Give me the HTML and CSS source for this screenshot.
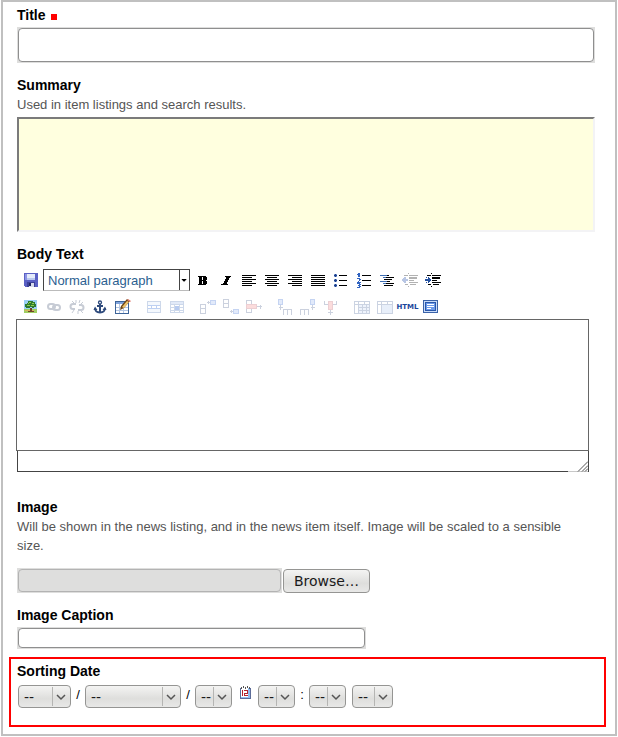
FILE: index.html
```html
<!DOCTYPE html>
<html lang="en">
<head>
<meta charset="utf-8">
<title>Edit News Item</title>
<link rel="stylesheet" href="styles.css">
</head>
<body>
<form class="frame">
  <div class="field">
    <label class="label" for="title">Title <span class="required"></span></label>
    <div class="well"><input class="input input-large" id="title" type="text"></div>
  </div>

  <div class="field">
    <label class="label" for="summary">Summary</label>
    <p class="help">Used in item listings and search results.</p>
    <textarea class="summary" id="summary"></textarea>
  </div>

  <div class="field">
    <label class="label" for="body-text">Body Text</label>
    <div class="toolbar">
      <div class="tools">
        <button class="tool" type="button" aria-label="Save"><svg viewBox="0 0 16 16"><path fill="#5a60c4" d="M1 1h14v14H2l-1-1z"/><path fill="#8c94e4" d="M2 2h2v6H2z"/><path fill="#e4ebfa" d="M4 2h8v6H4z"/><path fill="#b9c8ee" d="M4 6h8v2H4z"/><path fill="#3d4199" d="M4 10h8v5H4z"/><path fill="#d8dcec" d="M6 11h5v4H6z"/><path fill="#222766" d="M6 11h2v3H6z"/></svg></button>
        <span class="style-picker">
          <select class="style-select" aria-label="Paragraph style"><option>Normal paragraph</option></select>
          <svg class="style-arrow" viewBox="0 0 10 20"><path fill="#000" d="M2 9h5v1H6v1H5v1H4v-1H3v-1H2z"/></svg>
        </span>
        <button class="tool" type="button" aria-label="Bold"><svg viewBox="0 0 16 16"><path fill="#000" d="M3 4h8v1h1v3h-1v1h1v3h-1v1H3v-1h1V5H3zM7 5v3h1V5zM7 9v3h1V9z"/></svg></button>
        <button class="tool" type="button" aria-label="Italic"><svg viewBox="0 0 16 16"><path fill="#000" d="M7 4h6v1h-1v1h-1v2h-1v2H9v2h1v1H3v-1h2v-1h1V9h1V7h1V5H7z"/></svg></button>
        <button class="tool" type="button" aria-label="Align left"><svg viewBox="0 0 16 16"><path d="M1 3h14v1H1zM1 5h10v1H1zM1 7h14v1H1zM1 9h10v1H1zM1 11h14v1H1zM1 13h10v1H1z"/></svg></button>
        <button class="tool" type="button" aria-label="Align center"><svg viewBox="0 0 16 16"><path d="M1 3h14v1H1zM3 5h10v1H3zM1 7h14v1H1zM3 9h10v1H3zM1 11h14v1H1zM3 13h10v1H3z"/></svg></button>
        <button class="tool" type="button" aria-label="Align right"><svg viewBox="0 0 16 16"><path d="M1 3h14v1H1zM5 5h10v1H5zM1 7h14v1H1zM5 9h10v1H5zM1 11h14v1H1zM5 13h10v1H5z"/></svg></button>
        <button class="tool" type="button" aria-label="Justify"><svg viewBox="0 0 16 16"><path d="M1 3h14v1H1zM1 5h14v1H1zM1 7h14v1H1zM1 9h14v1H1zM1 11h14v1H1zM1 13h14v1H1z"/></svg></button>
        <button class="tool" type="button" aria-label="Bulleted list"><svg viewBox="0 0 16 16"><path d="M6 3h8v1H6zM6 8h8v1H6zM6 13h8v1H6z"/><path fill="#7f9dd2" d="M1 2h3v3H1zM1 7h3v3H1zM1 12h3v3H1z"/><path fill="#1d3f8c" d="M2 2h1v3H2zM1 3h3v1H1zM2 7h1v3H2zM1 8h3v1H1zM2 12h1v3H2zM1 13h3v1H1z"/></svg></button>
        <button class="tool" type="button" aria-label="Numbered list"><svg viewBox="0 0 16 16"><path d="M6 3h9v1H6zM6 8h9v1H6zM6 13h9v1H6z"/><path fill="#2f62c0" d="M2 1h2v4H2zM1 2h1v1H1zM1 6h3v1h1v1H4v1H3v1h2v1H1v-1h1V9h1V7H1zM1 11h3v1h1v1H4v1h1v1H4v1H1v-1h2v-1H2v-1h1v-1H1z"/></svg></button>
        <button class="tool" type="button" aria-label="Definition list"><svg viewBox="0 0 16 16"><path d="M5 3h5v1H5zM5 5h10v1H5zM5 7h8v1H5zM5 9h6v1H5zM5 11h10v1H5zM5 13h9v1H5z"/><path fill="#3f6fb4" d="M1 3h7v1H1zM1 9h7v1H1zM4 5h3v1H4zM4 11h3v1H4z"/></svg></button>
        <button class="tool" type="button" aria-label="Decrease indent"><svg viewBox="0 0 16 16"><path fill="#b2b2b2" d="M7 3h9v1H7zM7 5h8v2H7zM7 8h5v1H7zM7 10h9v1H7zM3 12h3v1H3zM8 12h6v1H8zM2 3h4v1H2zM6 1h1v1H6zM6 14h1v1H6z"/><path fill="#b8c6e4" d="M0 7h1V6h1V5h2v2h2v2H4v2H2v-1H1V9H0z"/></svg></button>
        <button class="tool" type="button" aria-label="Increase indent"><svg viewBox="0 0 16 16"><path d="M7 3h9v1H7zM7 5h8v2H7zM7 8h5v1H7zM7 10h9v1H7zM3 12h3v1H3zM8 12h6v1H8zM2 3h4v1H2zM6 1h1v1H6zM6 14h1v1H6z"/><path fill="#24509f" d="M0 7h3V5h1v1h1v1h1v2H5v1H4v1H3V9H0zM1 5h1v1H1zM1 10h1v1H1z"/></svg></button>
      </div>
      <div class="tools">
        <button class="tool" type="button" aria-label="Insert image"><svg viewBox="0 0 16 16"><path fill="#9bd1f4" d="M1 1h13v9H1z"/><path fill="#9fce62" d="M1 10h13v4H1z"/><path fill="#d9b35c" d="M2 11h9v1H2z"/><path fill="#70452a" d="M8 9h1v3h2v1H5v-1h2V9z"/><path fill="#2f7a30" d="M5 2h5v1h2v2h1v3h-2v1H9V8H7v1H3V8H2V5h2V4h1z"/><path fill="#8fd04a" d="M6 3h2v1H6zM9 4h2v1H9zM4 6h3v1H4zM8 6h3v1H8zM5 4h1v1H5z"/></svg></button>
        <button class="tool faded" type="button" aria-label="Insert link"><svg class="smooth" viewBox="0 0 16 16"><g fill="none" stroke="#758199" stroke-width="2"><rect x="2" y="5" width="7" height="5" rx="2.5"/><rect x="7" y="6" width="7" height="5" rx="2.5"/></g></svg></button>
        <button class="tool faded" type="button" aria-label="Remove link"><svg class="smooth" viewBox="0 0 16 16"><g fill="none" stroke="#758199" stroke-width="2"><path d="M7 5H4a2.500 2.500 0 0 0 0 5h2M10 6h2a2.500 2.500 0 0 1 0 5H9"/><path stroke-width="1" d="M7 1v3M3 2l2 2M11 1l-1 3M14 3l-2 2M9 12v3M5 11l-2 3M12 12l2 2"/></g></svg></button>
        <button class="tool" type="button" aria-label="Anchor"><svg class="smooth" viewBox="0 0 16 16"><g fill="none" stroke="#2e4a7c"><circle cx="8" cy="3.500" r="1.500" stroke-width="1.300"/><path stroke-width="2" d="M8 5v9M5 7h6"/><path stroke-width="1.800" d="M3 9c0 3 2 4.500 5 4.500s5-1.500 5-4.500"/></g><path fill="#2e4a7c" d="M1.500 11l1.500-3.500L5.500 11zM10.500 11L13 7.500 14.500 11z"/></svg></button>
        <button class="tool" type="button" aria-label="Insert table"><svg viewBox="0 0 16 16"><path fill="#3d6499" d="M0 2h14v13H0z"/><path fill="#fff" d="M1 5h12v9H1z"/><path fill="#7fa3dc" d="M1 3h12v2H1z"/><path fill="#b5c7e3" d="M1 8h12v1H1zM1 11h12v1H1zM4 5h1v9H4zM8 5h1v9H8z"/><g class="smooth"><path fill="#6b4415" d="M5 11l1-4 6-7 3 2-6 7z"/><path fill="#edc36b" d="M7 8l5-6 2 1-5 6z"/><path fill="#e07d70" d="M12 1l1-1 3 2-1 1z"/></g></svg></button>
        <span class="gap"></span>
        <button class="tool faded" type="button" aria-label="Row properties"><svg viewBox="0 0 16 16"><path fill="#84a0cc" d="M1 2h14v12H1z"/><path fill="#e6eefb" d="M2 3h12v3H2zM2 10h12v3H2z"/><path fill="#5b8ce0" d="M2 6h12v4H2z"/><path fill="#fff" d="M2 7h3v2H2zM6 7h4v2H6zM11 7h3v2h-3z"/></svg></button>
        <button class="tool faded" type="button" aria-label="Cell properties"><svg viewBox="0 0 16 16"><path fill="#84a0cc" d="M1 2h14v12H1z"/><path fill="#b9cdf0" d="M2 3h12v2H2z"/><path fill="#fff" d="M2 6h3v2H2zM6 6h4v1H6zM11 6h3v2h-3zM2 9h3v2H2zM11 9h3v2h-3zM2 12h3v1H2zM6 12h4v1H6zM11 12h3v1h-3z"/><path fill="#4d80dc" d="M6 7h4v4H6z"/></svg></button>
        <span class="gap"></span>
        <button class="tool faded" type="button" aria-label="Insert row before"><svg viewBox="0 0 16 16"><path fill="none" stroke="#7f8fae" d="M0.500 5.500h5v4h-5zM0.500 9.500h5v5h-5zM7 3.500h3M8.500 2v3"/><path fill="#7095df" d="M10 1h6v5h-6z"/><path fill="#b8cdf5" d="M11 2h4v3h-4z"/></svg></button>
        <button class="tool faded" type="button" aria-label="Insert row after"><svg viewBox="0 0 16 16"><path fill="none" stroke="#7f8fae" d="M0.500 0.500h5v4h-5zM0.500 4.500h5v4h-5zM7 12.500h3M8.500 11v3"/><path fill="#7095df" d="M10 10h6v5h-6z"/><path fill="#b8cdf5" d="M11 11h4v3h-4z"/></svg></button>
        <button class="tool faded" type="button" aria-label="Delete row"><svg viewBox="0 0 16 16"><path fill="none" stroke="#7f8fae" d="M0.500 1.500h5v4h-5zM0.500 9.500h5v4h-5zM11 7.500h5M14.500 6v4"/><path fill="#d08a94" d="M0 5h11v5H0z"/><path fill="#f6aaaa" d="M1 6h9v3H1z"/></svg></button>
        <span class="gap"></span>
        <button class="tool faded" type="button" aria-label="Insert column before"><svg viewBox="0 0 16 16"><path fill="none" stroke="#7f8fae" d="M6.500 16v-5.500h4V16M10.500 10.500h4V16M3.500 6v5M2 8.500h4"/><path fill="#7095df" d="M1 0h5v6H1z"/><path fill="#b8cdf5" d="M2 1h3v4H2z"/></svg></button>
        <button class="tool faded" type="button" aria-label="Insert column after"><svg viewBox="0 0 16 16"><path fill="none" stroke="#7f8fae" d="M0.500 16v-5.500h4V16M4.500 10.500h4V16M12.500 6v5M11 8.500h4"/><path fill="#7095df" d="M10 0h5v6h-5z"/><path fill="#b8cdf5" d="M11 1h3v4h-3z"/></svg></button>
        <button class="tool faded" type="button" aria-label="Delete column"><svg viewBox="0 0 16 16"><path fill="none" stroke="#7f8fae" d="M1.500 2v3.500h4M13.500 2v3.500h-4M7.500 10v6M5 13.500h5"/><path fill="#d08a94" d="M5 2h5v9H5z"/><path fill="#f6aaaa" d="M6 3h3v7H6z"/></svg></button>
        <span class="gap"></span>
        <button class="tool faded" type="button" aria-label="Split cells"><svg viewBox="0 0 16 16"><path fill="#8094b8" d="M0 2h16v13H0z"/><path fill="#fff" d="M1 3h3v2H1zM5 3h5v2H5zM11 3h4v2h-4zM1 6h3v8H1z"/><path fill="#d7e3f8" d="M5 6h3v2H5zM9 6h3v2H9zM13 6h2v2h-2zM5 9h3v2H5zM9 9h3v2H9zM13 9h2v2h-2zM5 12h3v2H5zM9 12h3v2H9zM13 12h2v2h-2z"/></svg></button>
        <button class="tool faded" type="button" aria-label="Merge cells"><svg viewBox="0 0 16 16"><path fill="#8094b8" d="M0 2h16v13H0z"/><path fill="#fff" d="M1 3h3v2H1zM5 3h5v2H5zM11 3h4v2h-4zM1 6h3v8H1z"/><path fill="#c7d8f5" d="M5 6h10v8H5z"/></svg></button>
        <button class="tool tool-html" type="button">HTML</button>
        <button class="tool" type="button" aria-label="Full screen"><svg viewBox="0 0 16 16"><path fill="#3a62a8" d="M0 1h15v13H0z"/><path fill="#c9dbf8" d="M1 2h13v11H1z"/><path fill="#2856a8" d="M2 3h11v9H2z"/><path fill="#6c9aea" d="M3 4h9v7H3z"/><path fill="#fff" d="M4 5h7v1H4zM4 7h7v1H4zM4 9h4v1H4z"/></svg></button>
      </div>
    </div>
    <div class="editor">
      <textarea class="editor-text" id="body-text"></textarea>
      <div class="status"><svg class="grip" viewBox="0 0 20 11"><path d="M0 10.500h20" stroke="#c8c8c8"/><path class="smooth" fill="none" stroke="#555" d="M10 10.500l10-10M14 10.500l6-6M17 10.500l3-3"/></svg></div>
    </div>
  </div>

  <div class="field">
    <label class="label" for="image">Image</label>
    <p class="help help-image">Will be shown in the news listing, and in the news item itself. Image will be scaled to a sensible size.</p>
    <div class="file">
      <div class="well well-file"><input class="input input-file" id="image" type="text" readonly></div>
      <button class="browse" type="button">Browse…</button>
    </div>
  </div>

  <div class="field">
    <label class="label" for="caption">Image Caption</label>
    <div class="well well-caption"><input class="input input-caption" id="caption" type="text"></div>
  </div>

  <fieldset class="sorting">
    <label class="label" for="year">Sorting Date</label>
    <div class="date">
      <span class="pick pick-year"><select id="year"><option>--</option></select><svg viewBox="0 0 18 19"><path d="M0.500 0v19" stroke="#b5b5b3"/><path class="chevron" d="M5 8l4 4 4-4"/></svg></span>
      <span class="slash">/</span>
      <span class="pick pick-month"><select aria-label="Month"><option>--</option></select><svg viewBox="0 0 18 19"><path d="M0.500 0v19" stroke="#b5b5b3"/><path class="chevron" d="M5 8l4 4 4-4"/></svg></span>
      <span class="slash">/</span>
      <span class="pick"><select aria-label="Day"><option>--</option></select><svg viewBox="0 0 18 19"><path d="M0.500 0v19" stroke="#b5b5b3"/><path class="chevron" d="M5 8l4 4 4-4"/></svg></span>
      <button class="calendar" type="button" aria-label="Open calendar"><svg viewBox="0 0 11 13"><path fill="#5c6c98" d="M0 2h11v11H0z"/><path fill="#8fbaf0" d="M1 2h9v10H1z"/><path fill="#fff" d="M1 2h7v9H1z"/><path fill="#555" d="M1 1h1v2H1zM3 0h1v2H3zM5 1h1v2H5zM7 0h1v2H7zM9 1h1v2H9z"/><path fill="#b5222e" d="M2 4h1v6H2zM4 4h4v4H5v1h3v1H4V7h3V5H4z"/></svg></button>
      <span class="pick"><select aria-label="Hour"><option>--</option></select><svg viewBox="0 0 18 19"><path d="M0.500 0v19" stroke="#b5b5b3"/><path class="chevron" d="M5 8l4 4 4-4"/></svg></span>
      <span class="slash">:</span>
      <span class="pick"><select aria-label="Minute"><option>--</option></select><svg viewBox="0 0 18 19"><path d="M0.500 0v19" stroke="#b5b5b3"/><path class="chevron" d="M5 8l4 4 4-4"/></svg></span>
      <span class="pick pick-ampm"><select aria-label="AM or PM"><option>--</option></select><svg viewBox="0 0 18 19"><path d="M0.500 0v19" stroke="#b5b5b3"/><path class="chevron" d="M5 8l4 4 4-4"/></svg></span>
    </div>
  </fieldset>
</form>
</body>
</html>
```
FILE: styles.css
```css
* { box-sizing: border-box; }

body {
  margin: 0 1px 1px;
  background: #fff;
  color: #000;
  font: 13px/19px "Liberation Sans", Arial, sans-serif;
}

input, select, textarea, button { margin: 0; font: inherit; }

.frame {
  border: 2px solid #c0c0c0;
  padding: 4px 9px 7px 6px;
}

.field { margin: 0 11px 13px 8px; }

.label { display: block; font-size: 14px; font-weight: bold; }

.required {
  display: inline-block;
  width: 6px;
  height: 6px;
  margin-left: 2px;
  background: #f00;
}

.help { margin: 0; color: #555; }
.help-image { margin-bottom: 13px; padding-right: 16px; }

.well { margin-top: 2px; padding: 1px; background: #dededd; }

.input {
  display: block;
  width: 100%;
  height: 34px;
  border: 1px solid #8f8f8f;
  border-radius: 4px;
  padding: 0 4px;
  background: #fff;
}

.summary {
  display: block;
  width: 100%;
  height: 115px;
  margin-top: 3px;
  border: 2px solid;
  border-color: #7b7b7b #f3f3f5 #f3f3f5 #7b7b7b;
  background: #ffffdf;
  resize: none;
}

.toolbar { padding: 5px 0 1px 2px; }
.tools { display: flex; height: 22px; }
.tools + .tools { margin-top: 5px; }

.tool {
  flex: none;
  width: 23px;
  padding: 3px 3px 3px 4px;
  border: 0;
  background: none;
}

.tool svg {
  display: block;
  width: 16px;
  height: 16px;
  shape-rendering: crispEdges;
}

.tool .smooth, .smooth { shape-rendering: auto; }
.faded svg { opacity: 0.4; }
.gap { width: 8px; }

.tool-html {
  padding: 0;
  color: #1b479c;
  font: bold 7px/22px "DejaVu Sans", sans-serif;
}

.style-picker {
  position: relative;
  display: flex;
  width: 147px;
  margin: 0 1px;
}

.style-select {
  width: 100%;
  appearance: none;
  border: 1px solid #444;
  border-bottom-color: #bbb;
  border-radius: 0;
  padding: 0 4px;
  background: #fff;
  color: #2b6090;
}

.style-arrow {
  position: absolute;
  top: 1px;
  right: 1px;
  width: 10px;
  height: 20px;
  border-left: 1px solid #444;
  pointer-events: none;
}

.editor { margin-right: 6px; }

.editor-text {
  display: block;
  width: calc(100% + 1px);
  height: 132px;
  margin-left: -1px;
  border: 1px solid #666;
  background: #fff;
  resize: none;
}

.status {
  display: flex;
  align-items: flex-end;
  justify-content: flex-end;
  height: 21px;
  margin-bottom: 26px;
  border: 1px solid #444;
  border-top: 0;
}

.grip { width: 20px; height: 11px; margin-bottom: -1px; }

.file { display: flex; gap: 1px; }
.well-file { width: 265px; margin: 0; }
.input-file { height: 23px; border-color: #b3b3b3; background: #dededd; }

.browse {
  width: 87px;
  height: 24px;
  margin-top: 1px;
  border: 1px solid #959593;
  border-radius: 4px;
  padding: 0;
  background: linear-gradient(#f4f4f3, #dededc 60%, #e8e8e7);
  color: #1a1a1a;
  font: 14px/20px "DejaVu Sans", sans-serif;
}

.well-caption { max-width: 349px; }
.input-caption { height: 20px; }

.sorting {
  min-width: 0;
  margin: -5px 0 0;
  border: 2px solid #f00;
  padding: 3px 6px 17px;
}

.date { display: flex; align-items: flex-start; padding: 4px 1px 0; }

.pick { position: relative; display: flex; width: 37px; height: 23px; }
.pick-year { width: 53px; }
.pick-month { width: 96px; }
.pick-ampm { width: 41px; margin-left: 6px; }

.pick select {
  width: 100%;
  appearance: none;
  border: 1px solid #959593;
  border-radius: 4px;
  padding: 0 0 0 5px;
  background: linear-gradient(#f4f4f3, #dededc 60%, #e8e8e7);
  color: #1a1a1a;
  font: 14px/20px "DejaVu Sans", sans-serif;
}

.pick svg {
  position: absolute;
  top: 2px;
  right: 1px;
  width: 18px;
  height: 19px;
  pointer-events: none;
}

.chevron { fill: none; stroke: #555; stroke-width: 1.5; }

.slash { width: 14px; text-align: center; }

.calendar {
  width: 26px;
  border: 0;
  padding: 1px 7px 0 8px;
  background: none;
}

.calendar svg {
  display: block;
  width: 11px;
  height: 13px;
  shape-rendering: crispEdges;
}
```
